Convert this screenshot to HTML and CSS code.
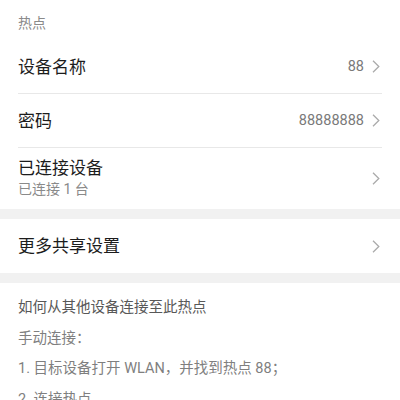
FILE: index.html
```html
<!DOCTYPE html>
<html lang="zh-CN">
<head>
<meta charset="utf-8">
<link rel="stylesheet" href="styles.css">
</head>
<body>
<div class="page">
  <div class="header">热点</div>
  <div class="group">
    <div class="row">
      <div class="label">设备名称</div>
      <div class="right"><span class="value">88</span><svg class="chev" viewBox="0 0 8 13" width="8" height="13"><path d="M1 0.8 L6.8 6.5 L1 12.2" fill="none" stroke="#ababab" stroke-width="1.3"/></svg></div>
    </div>
    <div class="row">
      <div class="label">密码</div>
      <div class="right"><span class="value">88888888</span><svg class="chev" viewBox="0 0 8 13" width="8" height="13"><path d="M1 0.8 L6.8 6.5 L1 12.2" fill="none" stroke="#ababab" stroke-width="1.3"/></svg></div>
    </div>
    <div class="row tall last">
      <div class="labels">
        <div class="label">已连接设备</div>
        <div class="sub">已连接 1 台</div>
      </div>
      <div class="right"><svg class="chev" viewBox="0 0 8 13" width="8" height="13"><path d="M1 0.8 L6.8 6.5 L1 12.2" fill="none" stroke="#ababab" stroke-width="1.3"/></svg></div>
    </div>
  </div>
  <div class="gap"></div>
  <div class="group">
    <div class="row last">
      <div class="label">更多共享设置</div>
      <div class="right"><svg class="chev" viewBox="0 0 8 13" width="8" height="13"><path d="M1 0.8 L6.8 6.5 L1 12.2" fill="none" stroke="#ababab" stroke-width="1.3"/></svg></div>
    </div>
  </div>
  <div class="gap"></div>
  <div class="info">
    <div class="info-title">如何从其他设备连接至此热点</div>
    <div class="info-line">手动连接：</div>
    <div class="info-line">1. 目标设备打开 WLAN，并找到热点 88；</div>
    <div class="info-line">2. 连接热点</div>
  </div>
</div>
</body>
</html>
```

FILE: styles.css
```css
html, body {
  margin: 0;
  padding: 0;
  background: #ffffff;
}
body {
  font-family: Roboto, "Noto Sans CJK SC", sans-serif;
  width: 400px;
  height: 400px;
  overflow: hidden;
}
.page {
  display: flex;
  flex-direction: column;
}
.header {
  height: 40px;
  padding: 0 18px;
  box-sizing: border-box;
  padding-top: 6px;
  line-height: 34px;
  font-size: 14px;
  color: #8a8a8a;
}
.group {
  display: flex;
  flex-direction: column;
  padding: 0 18px;
}
.row {
  display: flex;
  align-items: center;
  justify-content: space-between;
  height: 54px;
  box-sizing: border-box;
  border-bottom: 1px solid #e8e8e8;
}
.row.tall {
  height: 61px;
}
.row.last {
  border-bottom: none;
}
.label {
  font-size: 17px;
  color: #1c1c1c;
  line-height: 20px;
}
.labels {
  display: flex;
  flex-direction: column;
  gap: 1px;
}
.sub {
  font-size: 14px;
  color: #8a8a8a;
  line-height: 20px;
}
.right {
  display: flex;
  align-items: center;
  gap: 8px;
  padding-right: 2px;
}
.value {
  font-size: 14.5px;
  color: #7a7a7a;
}
.chev {
  display: block;
}
.gap {
  height: 10px;
  background: #f1f1f1;
}
.info {
  padding: 10px 18px 0;
  display: flex;
  flex-direction: column;
}
.info-title {
  font-size: 14.5px;
  line-height: 30.5px;
  color: #585858;
}
.info-line {
  font-size: 14.5px;
  line-height: 30.5px;
  color: #7f7f7f;
}
```
